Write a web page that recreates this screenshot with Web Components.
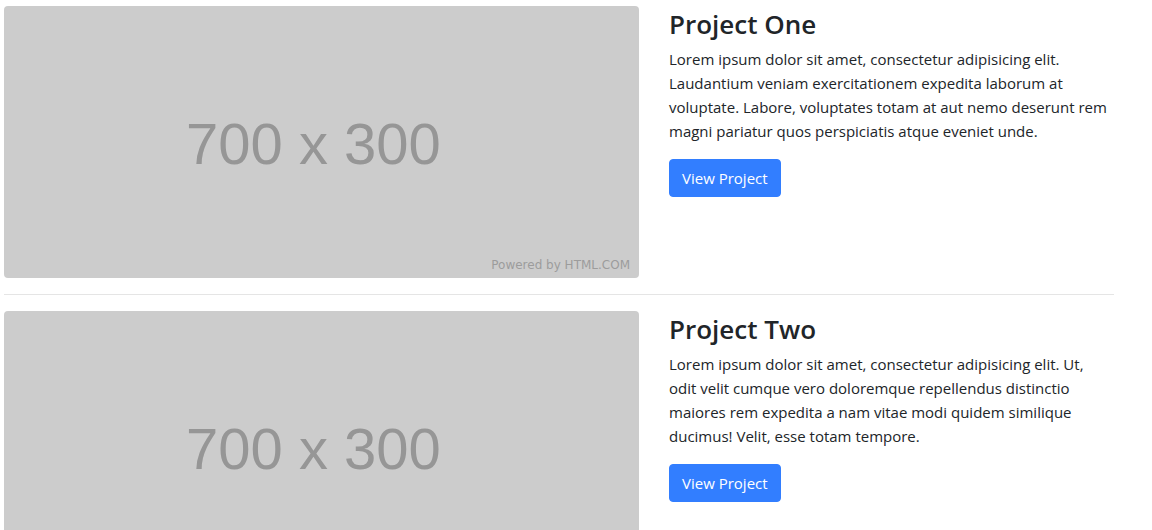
<!DOCTYPE html>
<html lang="en">
<head>
<meta charset="utf-8">
<meta name="viewport" content="width=device-width, initial-scale=1">
<title>Projects</title>
<style>
  html { background: #fff; }
  body {
    margin: 0;
    height: 100vh;
    overflow: hidden;
    color: #212529;
    font-family: "Segoe UI", "Open Sans", "Noto Sans", sans-serif;
    font-size: 15px;
    line-height: 24px;
  }
</style>
</head>
<body>
<project-list>
  <project-row>
    <placeholder-image slot="media" size="700 x 300"></placeholder-image>
    <span slot="title">Project One</span>
    <span slot="text">Lorem ipsum dolor sit amet, consectetur adipisicing elit. Laudantium veniam exercitationem expedita laborum at voluptate. Labore, voluptates totam at aut nemo deserunt rem magni pariatur quos perspiciatis atque eveniet unde.</span>
  </project-row>
  <project-row>
    <placeholder-image slot="media" size="700 x 300"></placeholder-image>
    <span slot="title">Project Two</span>
    <span slot="text">Lorem ipsum dolor sit amet, consectetur adipisicing elit. Ut, odit velit cumque vero doloremque repellendus distinctio maiores rem expedita a nam vitae modi quidem similique ducimus! Velit, esse totam tempore.</span>
  </project-row>
</project-list>

<script>
  class ProjectList extends HTMLElement {
    constructor() {
      super();
      this.attachShadow({ mode: "open" }).innerHTML = `
        <style>
          :host { display: block; padding: 6px 38px 0 4px; }
          ::slotted(project-row:not(:first-child)) {
            border-top: 1px solid #e5e5e5;
            margin-top: 16px;
            padding-top: 16px;
          }
        </style>
        <slot></slot>`;
    }
  }

  class ProjectRow extends HTMLElement {
    constructor() {
      super();
      this.attachShadow({ mode: "open" }).innerHTML = `
        <style>
          :host { display: block; }
          .row { display: grid; grid-template-columns: 7fr 5fr; margin: 0 -15px; }
          .media, .info { padding: 0 15px; min-width: 0; }
          h3 { margin: 0 0 5px; font-size: 26px; line-height: 36px; font-weight: 600; }
          p { margin: 0 0 16px; }
          a {
            display: inline-block;
            padding: 6px 12px;
            border: 1px solid #327eff;
            border-radius: 4px;
            background: #327eff;
            color: #fff;
            text-decoration: none;
          }
          a:hover { background: #1b6cf2; }
        </style>
        <div class="row">
          <div class="media"><slot name="media"></slot></div>
          <div class="info">
            <h3><slot name="title"></slot></h3>
            <p><slot name="text"></slot></p>
            <a href="#">View Project</a>
          </div>
        </div>`;
    }
  }

  class PlaceholderImage extends HTMLElement {
    constructor() {
      super();
      this.attachShadow({ mode: "open" }).innerHTML = `
        <style>
          :host {
            display: grid;
            grid-template: 1fr / 1fr;
            aspect-ratio: 635 / 272;
            border-radius: 4px;
            background: #ccc;
            color: #969696;
          }
          .size, .credit { grid-area: 1 / 1; }
          .size {
            place-self: center;
            padding-top: 4px;
            padding-right: 16px;
            font: 58px/80px "Liberation Sans Narrow", "Arial Narrow", "Liberation Sans", sans-serif;
          }
          .credit {
            place-self: end;
            padding: 0 9px 5px 0;
            color: #9c9c9c;
            font: 12px/16px "DejaVu Sans", sans-serif;
          }
        </style>
        <span class="size"></span>
        <span class="credit">Powered by HTML.COM</span>`;
    }
    connectedCallback() {
      this.shadowRoot.querySelector(".size").textContent = this.getAttribute("size");
    }
  }

  customElements.define("placeholder-image", PlaceholderImage);
  customElements.define("project-row", ProjectRow);
  customElements.define("project-list", ProjectList);
</script>
</body>
</html>
